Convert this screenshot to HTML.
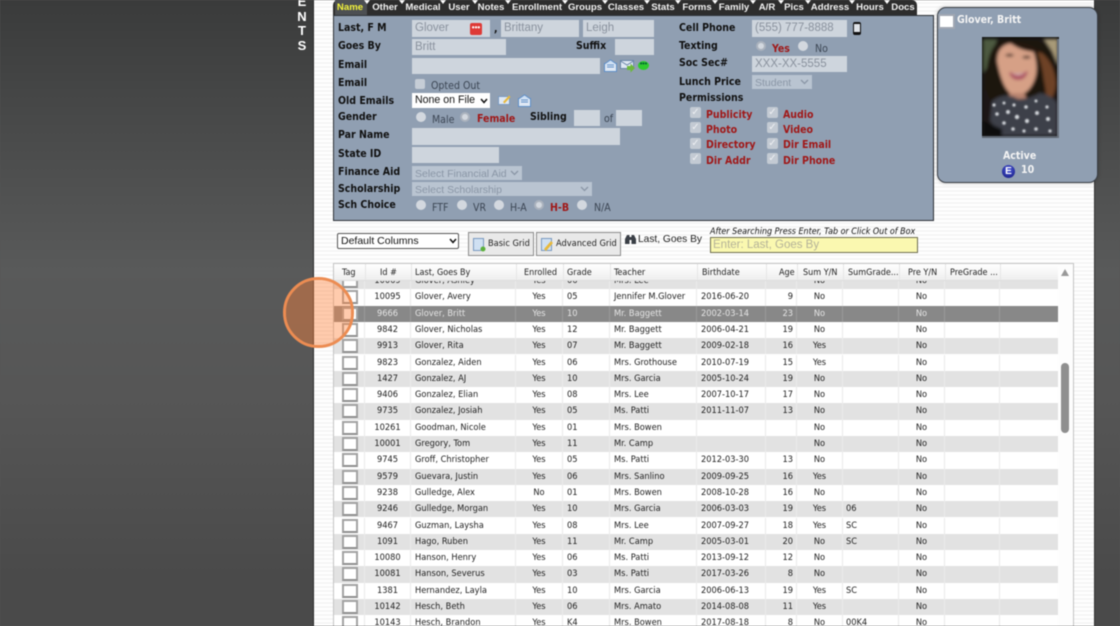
<!DOCTYPE html>
<html><head><meta charset="utf-8"><style>
html,body{margin:0;padding:0;width:1120px;height:626px;overflow:hidden;background:#555}
#p{position:relative;width:1120px;height:626px;overflow:hidden;background:linear-gradient(180deg,#3a3b3b 0,#464747 100px,#595a5a 270px,#565656 400px,#4a4a4a 580px,#4a4a4a 626px);filter:blur(.4px);font-family:"Liberation Sans",sans-serif}
#p div{position:absolute;box-sizing:border-box}
.l{font:bold 10.5px/14px "DejaVu Sans Condensed","DejaVu Sans",sans-serif;color:#111;white-space:nowrap}
.r{font:bold 10.5px/14px "DejaVu Sans Condensed","DejaVu Sans",sans-serif;color:#a01818;white-space:nowrap}
.g{font:10.5px/14px "DejaVu Sans Condensed","DejaVu Sans",sans-serif;color:#3c4654;white-space:nowrap}
.f{background:#ced5dd;color:#8a929e;font:11.5px/16px "Liberation Sans",sans-serif;padding-left:3px;white-space:nowrap}
.s{background:#b9c4d1;color:#8a96a6;font:10.5px/16px "Liberation Sans",sans-serif;padding-left:3px;white-space:nowrap}
.ra{width:10px;height:10px;border-radius:50%;background:#d3d8df}
.rc{width:10px;height:10px;border-radius:50%;background:#d3d8df;border:2px solid #aab2bd}
.c{width:11px;height:11px;background:#c3cad3;border-radius:2px;color:#eef0f3;font:bold 10px/11px "DejaVu Sans",sans-serif;text-align:center}
.t{top:0;height:15px;font:bold 9.6px/15px "Liberation Sans",sans-serif;color:#f2f2f2;white-space:nowrap;transform:translateX(-50%)}
.tr{top:0;width:0;height:0;border-left:3px solid transparent;border-right:3px solid transparent;border-top:4px solid #fff}
#rows{left:334px;top:281px;width:724px;height:345px;overflow:hidden}
.w{left:0;width:724px;height:16.3px;display:flex;font:9.2px/16.6px "DejaVu Sans Condensed","DejaVu Sans",sans-serif;color:#222;background:#fff}
.w.z{background:#e2e2e2}
.w.x{background:#888;color:#e4e4e4}
.w span{display:block;box-sizing:border-box;height:100%;border-right:1px solid #eaeaea;white-space:nowrap;overflow:visible;position:relative}
.w.x span{border-right-color:#999}
.w span:nth-child(1){width:31px}
.w span:nth-child(1) i{position:absolute;left:8px;top:1px;width:16px;height:14px;background:#fff;border:2px solid #a2a2a2;border-bottom-color:#8f8f8f;box-sizing:border-box;display:block}
.w span:nth-child(2){width:46px;text-align:center}
.w span:nth-child(3){width:105px;padding-left:4px}
.w span:nth-child(4){width:47px;text-align:center}
.w span:nth-child(5){width:47px;padding-left:4px}
.w span:nth-child(6){width:87px;padding-left:4px}
.w span:nth-child(7){width:69px;padding-left:4px}
.w span:nth-child(8){width:31px;text-align:right;padding-right:3px}
.w span:nth-child(9){width:46px;text-align:center}
.w span:nth-child(10){width:56px;padding-left:3px}
.w span:nth-child(11){width:46px;text-align:center}
.w span:nth-child(12){width:55px}
.w span:nth-child(13){width:58px;border-right:0}
.h{top:264px;height:17px;font:9px/18.6px "DejaVu Sans Condensed","DejaVu Sans",sans-serif;color:#222;white-space:nowrap}
.hl{top:264px;width:1px;height:16px;background:#e6e6e6}
.b{background:#e9e9e9;border:1px solid #8c8c8c;font:9.2px/22px "DejaVu Sans Condensed","DejaVu Sans",sans-serif;color:#222;white-space:nowrap}
</style></head><body><div id="p">
<div style="left:313px;top:0;width:1px;height:626px;background:#2c2c2c"></div>
<div style="left:314px;top:0;width:780px;height:626px;background:repeating-linear-gradient(180deg,#fff 0,#fff 2px,#f5f5f5 2px,#f5f5f5 4px)"></div>
<div style="left:1094px;top:0;width:1px;height:626px;background:#333"></div>
<div style="left:295px;top:-5px;width:14px;height:70px;color:#fff;font:bold 13px/14.7px 'Liberation Sans',sans-serif;text-align:center">E<br>N<br>T<br>S</div>

<!-- tabs -->
<div style="left:333px;top:0;width:584px;height:16px;background:#2d2d2d;border-radius:5px 5px 0 0"></div>
<div style="left:335px;top:0;width:32px;height:16px;background:#4c4f52"></div>
<div class="t" style="left:350px;color:#f4f43c">Name</div>
<div class="t" style="left:385px">Other</div>
<div class="t" style="left:423px">Medical</div>
<div class="t" style="left:459px">User</div>
<div class="t" style="left:491px">Notes</div>
<div class="t" style="left:537px">Enrollment</div>
<div class="t" style="left:585px">Groups</div>
<div class="t" style="left:626px">Classes</div>
<div class="t" style="left:663px">Stats</div>
<div class="t" style="left:697px">Forms</div>
<div class="t" style="left:734px">Family</div>
<div class="t" style="left:767px">A/R</div>
<div class="t" style="left:794px">Pics</div>
<div class="t" style="left:830px">Address</div>
<div class="t" style="left:870px">Hours</div>
<div class="t" style="left:903px">Docs</div>
<div class="tr" style="left:364px"></div><div class="tr" style="left:399px"></div><div class="tr" style="left:440px"></div><div class="tr" style="left:472px"></div><div class="tr" style="left:505px"></div><div class="tr" style="left:562px"></div><div class="tr" style="left:602px"></div><div class="tr" style="left:644px"></div><div class="tr" style="left:675px"></div><div class="tr" style="left:712px"></div><div class="tr" style="left:750px"></div><div class="tr" style="left:778px"></div><div class="tr" style="left:805px"></div><div class="tr" style="left:849px"></div><div class="tr" style="left:884px"></div>

<!-- form panel -->
<div style="left:333px;top:15px;width:601px;height:206px;background:#909fb2;border:1.5px solid #2e3238"></div>
<div class="l" style="left:338px;top:21px">Last, F M</div>
<div class="f" style="left:412px;top:20px;width:78px;height:17px">Glover</div>
<div style="left:470px;top:23px;width:12px;height:12px;background:#de3a36;border-radius:2px;color:#fff;font:bold 8px/10px 'Liberation Sans',sans-serif;text-align:center">•••</div>
<div class="l" style="left:494px;top:22px">,</div>
<div class="f" style="left:501px;top:20px;width:78px;height:17px">Brittany</div>
<div class="f" style="left:583px;top:20px;width:71px;height:17px">Leigh</div>
<div class="l" style="left:338px;top:39px">Goes By</div>
<div class="f" style="left:412px;top:39px;width:94px;height:16px">Britt</div>
<div class="l" style="left:576px;top:39px">Suffix</div>
<div class="f" style="left:615px;top:39px;width:39px;height:16px"></div>
<div class="l" style="left:338px;top:58px">Email</div>
<div class="f" style="left:412px;top:58px;width:188px;height:16px"></div>
<svg style="position:absolute;left:604px;top:59px" width="13" height="13" viewBox="0 0 13 13"><rect x=".5" y="4.5" width="12" height="8" fill="#dfe8f4" stroke="#5f8fc8"/><path d="M.5 5 6.5.8 12.5 5M3 6h7M3 8h7" fill="#cfe0f4" stroke="#5f8fc8"/></svg>
<svg style="position:absolute;left:620px;top:60px" width="15" height="13" viewBox="0 0 15 13"><rect x=".5" y=".5" width="13" height="8" fill="#dfe8f4" stroke="#6a86a8"/><path d="M.5 1 7 5 13.5 1" fill="none" stroke="#6a86a8"/><path d="M7 6h3.500V3.500L15 8l-4.500 4.500V10H7z" fill="#6cb83c"/></svg>
<div style="left:638px;top:61px;width:11px;height:9px;border-radius:50%;background:#2ecb2e;color:#063;font:bold 7px/8px 'Liberation Sans',sans-serif;text-align:center">•••</div>
<div class="l" style="left:338px;top:76px">Email</div>
<div class="c" style="left:415px;top:79px;width:10px;height:10px;background:#c6cdd6"></div>
<div class="g" style="left:431px;top:79px">Opted Out</div>
<div class="l" style="left:338px;top:94px">Old Emails</div>
<div style="left:412px;top:93px;width:78px;height:15px;background:#fff;color:#111;font:10.6px/15px 'Liberation Sans',sans-serif;padding-left:3px;white-space:nowrap">None on File</div>
<svg style="position:absolute;left:480px;top:98px" width="8" height="6" viewBox="0 0 8 6"><path d="M1 1 4 4.500 7 1" fill="none" stroke="#111" stroke-width="1.500"/></svg>
<svg style="position:absolute;left:498px;top:94px" width="13" height="12" viewBox="0 0 13 12"><rect x=".5" y="2.500" width="11" height="8" fill="#dfe8f4" stroke="#7a9ac0"/><path d="M5 8 11 1.500 12.500 3 6.500 9.500z" fill="#e8b93c"/></svg>
<svg style="position:absolute;left:518px;top:94px" width="13" height="13" viewBox="0 0 13 13"><rect x=".5" y="4.500" width="12" height="8" fill="#dfe8f4" stroke="#5f8fc8"/><path d="M.5 5 6.500.8 12.500 5M3 6h7M3 8h7" fill="#cfe0f4" stroke="#5f8fc8"/></svg>
<div class="l" style="left:338px;top:110px">Gender</div>
<div class="ra" style="left:416px;top:112px"></div>
<div class="g" style="left:432px;top:113px">Male</div>
<div class="rc" style="left:460px;top:112px"></div>
<div class="r" style="left:477px;top:112px">Female</div>
<div class="l" style="left:530px;top:110px">Sibling</div>
<div class="f" style="left:574px;top:110px;width:26px;height:16px"></div>
<div class="g" style="left:604px;top:112px">of</div>
<div class="f" style="left:616px;top:110px;width:26px;height:16px"></div>
<div class="l" style="left:338px;top:128px">Par Name</div>
<div class="f" style="left:412px;top:128px;width:208px;height:17px"></div>
<div class="l" style="left:338px;top:147px">State ID</div>
<div class="f" style="left:412px;top:147px;width:87px;height:16px"></div>
<div class="l" style="left:338px;top:165px">Finance Aid</div>
<div class="s" style="left:412px;top:166px;width:110px;height:14px">Select Financial Aid</div>
<svg style="position:absolute;left:510px;top:170px" width="9" height="6" viewBox="0 0 9 6"><path d="M1 1 4.500 4.500 8 1" fill="none" stroke="#8a96a6" stroke-width="1.300"/></svg>
<div class="l" style="left:338px;top:182px">Scholarship</div>
<div class="s" style="left:412px;top:182px;width:180px;height:14px">Select Scholarship</div>
<svg style="position:absolute;left:580px;top:186px" width="9" height="6" viewBox="0 0 9 6"><path d="M1 1 4.500 4.500 8 1" fill="none" stroke="#8a96a6" stroke-width="1.300"/></svg>
<div class="l" style="left:338px;top:198px">Sch Choice</div>
<div class="ra" style="left:416px;top:200px"></div><div class="g" style="left:432px;top:201px">FTF</div>
<div class="ra" style="left:457px;top:200px"></div><div class="g" style="left:473px;top:201px">VR</div>
<div class="ra" style="left:494px;top:200px"></div><div class="g" style="left:510px;top:201px">H-A</div>
<div class="rc" style="left:534px;top:200px"></div><div class="r" style="left:550px;top:201px">H-B</div>
<div class="ra" style="left:577px;top:200px"></div><div class="g" style="left:594px;top:201px">N/A</div>

<!-- right col -->
<div class="l" style="left:679px;top:21px">Cell Phone</div>
<div class="f" style="left:752px;top:20px;width:95px;height:17px">(555) 777-8888</div>
<div style="left:853px;top:22px;width:8px;height:13px;background:#dfe3e8;border:1px solid #111;border-width:2px 1px 3px;border-radius:2px"></div>
<div class="l" style="left:679px;top:39px">Texting</div>
<div class="rc" style="left:756px;top:41px"></div>
<div class="r" style="left:772px;top:42px">Yes</div>
<div class="ra" style="left:798px;top:41px"></div>
<div class="g" style="left:815px;top:42px">No</div>
<div class="l" style="left:679px;top:56px">Soc Sec#</div>
<div class="f" style="left:752px;top:56px;width:95px;height:16px">XXX-XX-5555</div>
<div class="l" style="left:679px;top:75px">Lunch Price</div>
<div class="s" style="left:752px;top:75px;width:60px;height:14px">Student</div>
<svg style="position:absolute;left:800px;top:79px" width="9" height="6" viewBox="0 0 9 6"><path d="M1 1 4.500 4.500 8 1" fill="none" stroke="#8a96a6" stroke-width="1.300"/></svg>
<div class="l" style="left:679px;top:91px">Permissions</div>
<div class="c" style="left:690px;top:107px">✓</div><div class="r" style="left:706px;top:108px">Publicity</div>
<div class="c" style="left:767px;top:107px">✓</div><div class="r" style="left:783px;top:108px">Audio</div>
<div class="c" style="left:690px;top:122px">✓</div><div class="r" style="left:706px;top:123px">Photo</div>
<div class="c" style="left:767px;top:122px">✓</div><div class="r" style="left:783px;top:123px">Video</div>
<div class="c" style="left:690px;top:138px">✓</div><div class="r" style="left:706px;top:138px">Directory</div>
<div class="c" style="left:767px;top:138px">✓</div><div class="r" style="left:783px;top:138px">Dir Email</div>
<div class="c" style="left:690px;top:153px">✓</div><div class="r" style="left:706px;top:154px">Dir Addr</div>
<div class="c" style="left:767px;top:153px">✓</div><div class="r" style="left:783px;top:154px">Dir Phone</div>

<!-- card -->
<div style="left:937px;top:7px;width:161px;height:176px;background:#909fb2;border:1.5px solid #3a3f46;border-radius:9px;box-shadow:0 0 4px rgba(0,0,0,.25)"></div>
<div style="left:938px;top:14px;width:17px;height:15px;background:#fff;border:2px solid #a0a7b2"></div>
<div class="l" style="left:957px;top:13px;color:#f4f4f4">Glover, Britt</div>
<svg style="position:absolute;left:982px;top:37px" width="77" height="101" viewBox="0 0 77 101">
<defs><filter id="bl"><feGaussianBlur stdDeviation="1.6"/></filter><filter id="bs"><feGaussianBlur stdDeviation=".8"/></filter></defs>
<rect width="77" height="101" fill="#111"/>
<g filter="url(#bl)">
<rect x="1" y="2" width="75" height="97" fill="#1a1816"/>
<path d="M1 2h14L7 28 1 36z" fill="#4d5a40"/>
<path d="M62 2h14v26L70 14z" fill="#a89a78"/>
<path d="M4 52Q3 12 18 4 44-2 64 8 76 24 75 48 74 62 62 68L20 76Q8 68 4 52z" fill="#1f120e"/>
<path d="M54 12Q72 22 74 46 73 62 62 70 66 62 62 44 60 26 54 12z" fill="#6e4226"/>
<path d="M15 24Q15 8 30 6 46 6 52 16 57 32 52 44 46 58 35 58 22 60 15 24z" fill="#d6a086"/>
<path d="M28 56h14l4 8H24z" fill="#b98470"/>
<path d="M28 6Q46 3 62 16 50 15 42 13 35 11 28 6z" fill="#24140f"/>
<path d="M23 18q5-2.500 9 0l-2 1.500h-5zM40 20q5-2.500 9 0l-2 1.500h-5z" fill="#2e1a14"/>
<path d="M27 35Q36 38 46 34 44 43 36 43 29 43 27 35z" fill="#ad5563"/>
<path d="M30 36Q36 38 43 35.500 36 40 30 36z" fill="#f3e8e2"/>
<path d="M10 64Q24 54 36 62 48 62 58 56 70 58 75 66V99H20L8 84z" fill="#3c4148"/>
<path d="M1 84 20 92V99H1z" fill="#0c0c0c"/>
</g>
<g filter="url(#bs)" fill="#d2d6da"><circle cx="12" cy="68" r="1.600"/><circle cx="15" cy="77" r="1.800"/><circle cx="22" cy="66" r="1.500"/><circle cx="26" cy="75" r="2"/><circle cx="22" cy="86" r="1.800"/><circle cx="32" cy="68" r="1.600"/><circle cx="35" cy="80" r="2.200"/><circle cx="31" cy="92" r="1.800"/><circle cx="44" cy="70" r="1.800"/><circle cx="45" cy="84" r="2.100"/><circle cx="42" cy="94" r="1.600"/><circle cx="54" cy="64" r="1.500"/><circle cx="55" cy="76" r="2"/><circle cx="54" cy="92" r="1.800"/><circle cx="65" cy="70" r="1.600"/><circle cx="66" cy="82" r="2"/><circle cx="68" cy="94" r="1.600"/></g>
<rect x="0" y="99" width="77" height="2" fill="#5e6671"/>
<rect x="75" y="2" width="2" height="99" fill="#69717c"/>
</svg>
<div class="l" style="left:1003px;top:149px;color:#f4f4f4">Active</div>
<div style="left:1002px;top:165px;width:13px;height:13px;border-radius:50%;background:radial-gradient(circle at 50% 35%,#4a58d8,#14187c);color:#fff;font:bold 10px/13px 'Liberation Sans',sans-serif;text-align:center">E</div>
<div class="l" style="left:1021px;top:163px;color:#f4f4f4">10</div>

<!-- toolbar -->
<div style="left:337px;top:233px;width:122px;height:16px;background:#fff;border:1px solid #555;border-radius:2px;font:10.5px/14px 'Liberation Sans',sans-serif;color:#111;padding-left:3px">Default Columns</div>
<svg style="position:absolute;left:449px;top:238px" width="8" height="6" viewBox="0 0 8 6"><path d="M1 1 4 4.500 7 1" fill="none" stroke="#111" stroke-width="1.500"/></svg>
<div class="b" style="left:468px;top:232px;width:66px;height:24px;padding-left:19px">Basic Grid</div>
<svg style="position:absolute;left:473px;top:238px" width="13" height="14" viewBox="0 0 13 14"><rect x=".5" y=".5" width="10" height="12" fill="#cfe0f2" stroke="#7a9ac0"/><circle cx="10" cy="11" r="2.500" fill="#5cb03c"/></svg>
<div class="b" style="left:536px;top:232px;width:85px;height:24px;padding-left:19px">Advanced Grid</div>
<svg style="position:absolute;left:541px;top:238px" width="13" height="14" viewBox="0 0 13 14"><rect x=".5" y=".5" width="10" height="12" fill="#cfe0f2" stroke="#7a9ac0"/><path d="M3 11 10 3l2 2-7 8z" fill="#e8b93c"/></svg>
<svg style="position:absolute;left:624px;top:234px" width="13" height="11" viewBox="0 0 13 11"><path d="M1 10V5l2-4h2.500v2h2V1H10l2 4v5H7.500V6h-2v4z" fill="#3a3f46"/></svg>
<div style="left:638px;top:233px;font:10.2px/14px 'Liberation Sans',sans-serif;color:#222;white-space:nowrap">Last, Goes By</div>
<div style="left:710px;top:226px;font:italic 8.9px/13px 'DejaVu Sans Condensed','Liberation Sans',sans-serif;color:#111;white-space:nowrap">After Searching Press Enter, Tab or Click Out of Box</div>
<div style="left:710px;top:237px;width:208px;height:16px;background:#faf8b0;border:1px solid #6e6e50;font:11.5px/14px 'Liberation Sans',sans-serif;color:#b4b298;padding-left:2px;white-space:nowrap">Enter: Last, Goes By</div>

<!-- grid -->
<div style="left:333px;top:263px;width:741px;height:363px;background:#fdfdfd;border:1px solid #c4c4c4;border-bottom:0"></div>
<div id="rows">
<div class="w z" style="top:-8px"><span><i></i></span><span>10069</span><span>Glover, Ashley</span><span>Yes</span><span>06</span><span>Mrs. Lee</span><span></span><span></span><span>No</span><span></span><span>No</span><span></span><span></span></div>
<div class="w" style="top:8.3px"><span><i></i></span><span>10095</span><span>Glover, Avery</span><span>Yes</span><span>05</span><span>Jennifer M.Glover</span><span>2016-06-20</span><span>9</span><span>No</span><span></span><span>No</span><span></span><span></span></div>
<div class="w x" style="top:24.6px"><span><i></i></span><span>9666</span><span>Glover, Britt</span><span>Yes</span><span>10</span><span>Mr. Baggett</span><span>2002-03-14</span><span>23</span><span>No</span><span></span><span>No</span><span></span><span></span></div>
<div class="w" style="top:40.9px"><span><i></i></span><span>9842</span><span>Glover, Nicholas</span><span>Yes</span><span>12</span><span>Mr. Baggett</span><span>2006-04-21</span><span>19</span><span>No</span><span></span><span>No</span><span></span><span></span></div>
<div class="w z" style="top:57.2px"><span><i></i></span><span>9913</span><span>Glover, Rita</span><span>Yes</span><span>07</span><span>Mr. Baggett</span><span>2009-02-18</span><span>16</span><span>Yes</span><span></span><span>No</span><span></span><span></span></div>
<div class="w" style="top:73.5px"><span><i></i></span><span>9823</span><span>Gonzalez, Aiden</span><span>Yes</span><span>06</span><span>Mrs. Grothouse</span><span>2010-07-19</span><span>15</span><span>Yes</span><span></span><span>No</span><span></span><span></span></div>
<div class="w z" style="top:89.8px"><span><i></i></span><span>1427</span><span>Gonzalez, AJ</span><span>Yes</span><span>10</span><span>Mrs. Garcia</span><span>2005-10-24</span><span>19</span><span>No</span><span></span><span>No</span><span></span><span></span></div>
<div class="w" style="top:106.1px"><span><i></i></span><span>9406</span><span>Gonzalez, Elian</span><span>Yes</span><span>08</span><span>Mrs. Lee</span><span>2007-10-17</span><span>17</span><span>No</span><span></span><span>No</span><span></span><span></span></div>
<div class="w z" style="top:122.4px"><span><i></i></span><span>9735</span><span>Gonzalez, Josiah</span><span>Yes</span><span>05</span><span>Ms. Patti</span><span>2011-11-07</span><span>13</span><span>No</span><span></span><span>No</span><span></span><span></span></div>
<div class="w" style="top:138.7px"><span><i></i></span><span>10261</span><span>Goodman, Nicole</span><span>Yes</span><span>01</span><span>Mrs. Bowen</span><span></span><span></span><span>No</span><span></span><span>No</span><span></span><span></span></div>
<div class="w z" style="top:155px"><span><i></i></span><span>10001</span><span>Gregory, Tom</span><span>Yes</span><span>11</span><span>Mr. Camp</span><span></span><span></span><span>No</span><span></span><span>No</span><span></span><span></span></div>
<div class="w" style="top:171.3px"><span><i></i></span><span>9745</span><span>Groff, Christopher</span><span>Yes</span><span>05</span><span>Ms. Patti</span><span>2012-03-30</span><span>13</span><span>No</span><span></span><span>No</span><span></span><span></span></div>
<div class="w z" style="top:187.6px"><span><i></i></span><span>9579</span><span>Guevara, Justin</span><span>Yes</span><span>06</span><span>Mrs. Sanlino</span><span>2009-09-25</span><span>16</span><span>Yes</span><span></span><span>No</span><span></span><span></span></div>
<div class="w" style="top:203.9px"><span><i></i></span><span>9238</span><span>Gulledge, Alex</span><span>No</span><span>01</span><span>Mrs. Bowen</span><span>2008-10-28</span><span>16</span><span>No</span><span></span><span>No</span><span></span><span></span></div>
<div class="w z" style="top:220.2px"><span><i></i></span><span>9246</span><span>Gulledge, Morgan</span><span>Yes</span><span>10</span><span>Mrs. Garcia</span><span>2006-03-03</span><span>19</span><span>Yes</span><span>06</span><span>No</span><span></span><span></span></div>
<div class="w" style="top:236.5px"><span><i></i></span><span>9467</span><span>Guzman, Laysha</span><span>Yes</span><span>08</span><span>Mrs. Lee</span><span>2007-09-27</span><span>18</span><span>Yes</span><span>SC</span><span>No</span><span></span><span></span></div>
<div class="w z" style="top:252.8px"><span><i></i></span><span>1091</span><span>Hago, Ruben</span><span>Yes</span><span>11</span><span>Mr. Camp</span><span>2005-03-01</span><span>20</span><span>No</span><span>SC</span><span>No</span><span></span><span></span></div>
<div class="w" style="top:269.1px"><span><i></i></span><span>10080</span><span>Hanson, Henry</span><span>Yes</span><span>06</span><span>Ms. Patti</span><span>2013-09-12</span><span>12</span><span>No</span><span></span><span>No</span><span></span><span></span></div>
<div class="w z" style="top:285.4px"><span><i></i></span><span>10081</span><span>Hanson, Severus</span><span>Yes</span><span>03</span><span>Ms. Patti</span><span>2017-03-26</span><span>8</span><span>No</span><span></span><span>No</span><span></span><span></span></div>
<div class="w" style="top:301.7px"><span><i></i></span><span>1381</span><span>Hernandez, Layla</span><span>Yes</span><span>10</span><span>Mrs. Garcia</span><span>2006-06-13</span><span>19</span><span>Yes</span><span>SC</span><span>No</span><span></span><span></span></div>
<div class="w z" style="top:318px"><span><i></i></span><span>10142</span><span>Hesch, Beth</span><span>Yes</span><span>06</span><span>Mrs. Amato</span><span>2014-08-08</span><span>11</span><span>Yes</span><span></span><span>No</span><span></span><span></span></div>
<div class="w" style="top:334.3px"><span><i></i></span><span>10143</span><span>Hesch, Brandon</span><span>Yes</span><span>K4</span><span>Mrs. Bowen</span><span>2017-08-18</span><span>8</span><span>No</span><span>00K4</span><span>No</span><span></span><span></span></div>
</div>
<div style="left:334px;top:264px;width:724px;height:17px;background:linear-gradient(180deg,#fff,#eee);border-bottom:1px solid #ddd"></div>
<div class="h" style="left:342px">Tag</div><div class="hl" style="left:365px"></div>
<div class="h" style="left:380px">Id #</div><div class="hl" style="left:411px"></div>
<div class="h" style="left:415px">Last, Goes By</div><div class="hl" style="left:516px"></div>
<div class="h" style="left:524px">Enrolled</div><div class="hl" style="left:563px"></div>
<div class="h" style="left:567px">Grade</div><div class="hl" style="left:610px"></div>
<div class="h" style="left:614px">Teacher</div><div class="hl" style="left:697px"></div>
<div class="h" style="left:702px">Birthdate</div><div class="hl" style="left:766px"></div>
<div class="h" style="left:779px">Age</div><div class="hl" style="left:797px"></div>
<div class="h" style="left:803px">Sum Y/N</div><div class="hl" style="left:843px"></div>
<div class="h" style="left:848px">SumGrade...</div><div class="hl" style="left:899px"></div>
<div class="h" style="left:908px">Pre Y/N</div><div class="hl" style="left:945px"></div>
<div class="h" style="left:950px">PreGrade ...</div><div class="hl" style="left:1000px"></div>
<div style="left:1061px;top:269px;width:0;height:0;border-left:4.5px solid transparent;border-right:4.5px solid transparent;border-bottom:7px solid #999"></div>
<div style="left:1061px;top:363px;width:8px;height:70px;background:#8f8f8f;border-radius:4px"></div>

<!-- highlight -->
<div style="left:283px;top:277px;width:71px;height:71px;border-radius:50%;background:rgba(255,130,60,.42);border:3px solid #ec8c52;background-clip:padding-box"></div>
</div></body></html>
